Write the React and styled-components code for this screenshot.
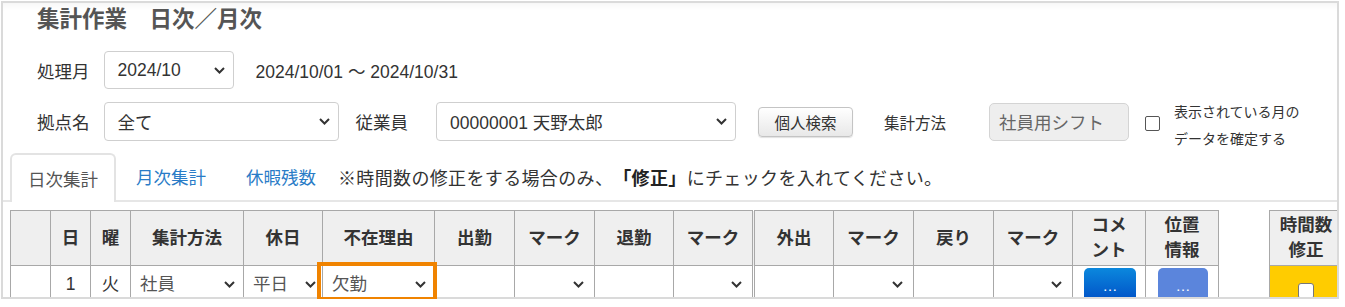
import styled, { createGlobalStyle } from "styled-components";

const GlobalStyle = createGlobalStyle`
  body {
    margin: 0;
    background: #fff;
    font-family: "Liberation Sans", "Noto Sans CJK JP", sans-serif;
    color: #333;
  }
`;

function Chevron() {
  return (
    <svg width="11" height="7" viewBox="0 0 11 7">
      <polyline
        points="1,1 5.5,5.5 10,1"
        fill="none"
        stroke="#333"
        strokeWidth="2"
      />
    </svg>
  );
}

const main = [
  { w: 40, label: "" },
  { w: 40, label: "日" },
  { w: 40, label: "曜" },
  { w: 113, label: "集計方法" },
  { w: 79, label: "休日" },
  { w: 112, label: "不在理由" },
  { w: 80, label: "出勤" },
  { w: 80, label: "マーク" },
  { w: 79, label: "退勤" },
  { w: 80, label: "マーク" },
  { w: 80, label: "外出", split: true },
  { w: 80, label: "マーク" },
  { w: 80, label: "戻り" },
  { w: 79, label: "マーク" },
  { w: 73, label: ["コメ", "ント"] },
  { w: 73, label: ["位置", "情報"] },
];

export default function App() {
  return (
    <>
      <GlobalStyle />
      <Frame>
        <Clip>
          <Title>集計作業　日次／月次</Title>

          <FormRow $top={14} $height={38}>
            <Label>処理月</Label>
            <SelectBox $width={130} $gap={14}>
              <span>2024/10</span>
              <Chevron />
            </SelectBox>
            <Plain $gap={22}>2024/10/01 ～ 2024/10/31</Plain>
          </FormRow>

          <FormRow $top={13} $height={39}>
            <Label>拠点名</Label>
            <SelectBox $width={235} $gap={14}>
              <span>全て</span>
              <Chevron />
            </SelectBox>
            <Label $gap={17}>従業員</Label>
            <SelectBox $width={300} $gap={28}>
              <span>00000001 天野太郎</span>
              <Chevron />
            </SelectBox>
            <SearchButton>個人検索</SearchButton>
            <Label $gap={31} $size={15.5}>
              集計方法
            </Label>
            <ReadOnlyBox>社員用シフト</ReadOnlyBox>
            <CheckBox $gap={16} />
            <ConfirmText>
              表示されている月の
              <br />
              データを確定する
            </ConfirmText>
          </FormRow>

          <TabBar>
            <Tab $active>日次集計</Tab>
            <Tab>月次集計</Tab>
            <Tab>休暇残数</Tab>
            <Note>
              ※時間数の修正をする場合のみ、<b>「修正」</b>にチェックを入れてください。
            </Note>
          </TabBar>

          <TableArea>
            <Grid style={{ width: 1208 }}>
              <colgroup>
                {main.map((c, i) => (
                  <col key={i} style={{ width: c.w }} />
                ))}
              </colgroup>
              <thead>
                <tr>
                  {main.map((c, i) => (
                    <Th key={i} $split={c.split}>
                      {Array.isArray(c.label) ? (
                        <>
                          {c.label[0]}
                          <br />
                          {c.label[1]}
                        </>
                      ) : (
                        c.label
                      )}
                    </Th>
                  ))}
                </tr>
              </thead>
              <tbody>
                <tr>
                  <Td />
                  <Td $center>1</Td>
                  <Td $center>火</Td>
                  <Td>
                    <CellSelect>
                      <span>社員</span>
                      <Chevron />
                    </CellSelect>
                  </Td>
                  <Td>
                    <CellSelect $right={6}>
                      <span>平日</span>
                      <Chevron />
                    </CellSelect>
                  </Td>
                  <Td>
                    <CellSelect>
                      <span>欠勤</span>
                      <Chevron />
                    </CellSelect>
                  </Td>
                  <Td />
                  <Td>
                    <CellSelect $right={10}>
                      <span />
                      <Chevron />
                    </CellSelect>
                  </Td>
                  <Td />
                  <Td>
                    <CellSelect $right={10}>
                      <span />
                      <Chevron />
                    </CellSelect>
                  </Td>
                  <Td $split />
                  <Td>
                    <CellSelect $right={10}>
                      <span />
                      <Chevron />
                    </CellSelect>
                  </Td>
                  <Td />
                  <Td>
                    <CellSelect $right={10}>
                      <span />
                      <Chevron />
                    </CellSelect>
                  </Td>
                  <Td>
                    <DotButton $left={11} $width={52}>
                      …
                    </DotButton>
                  </Td>
                  <Td>
                    <DotButton $left={12} $width={50} $pale>
                      …
                    </DotButton>
                  </Td>
                </tr>
              </tbody>
            </Grid>

            <Grid style={{ width: 74 }}>
              <thead>
                <tr>
                  <Th>
                    時間数
                    <br />
                    修正
                  </Th>
                </tr>
              </thead>
              <tbody>
                <tr>
                  <FixCell>
                    <SmallCheck />
                  </FixCell>
                </tr>
              </tbody>
            </Grid>
          </TableArea>
        </Clip>
        <Highlight />
      </Frame>
    </>
  );
}

const Frame = styled.div`
  position: relative;
  box-sizing: border-box;
  width: 1338px;
  height: 298px;
  margin: 1px 0 0 1px;
  border: 2px solid #dadada;
  box-shadow: inset 0 9px 8px -8px rgba(0, 0, 0, 0.06);
`;

const Clip = styled.div`
  height: 100%;
  overflow: hidden;
  display: flex;
  flex-direction: column;
`;

const Title = styled.h1`
  margin: 0;
  padding-left: 34px;
  height: 34px;
  line-height: 34px;
  font-size: 22.5px;
  font-weight: bold;
  color: #555;
  white-space: nowrap;
`;

const FormRow = styled.div`
  display: flex;
  align-items: center;
  flex-shrink: 0;
  margin-top: ${(p) => p.$top}px;
  height: ${(p) => p.$height}px;
  padding-left: 34px;
  white-space: nowrap;
`;

const Label = styled.span`
  margin-left: ${(p) => p.$gap || 0}px;
  font-size: ${(p) => p.$size || 17.5}px;
  color: #333;
`;

const Plain = styled.span`
  margin-left: ${(p) => p.$gap}px;
  font-size: 17.5px;
  color: #333;
`;

const SelectBox = styled.div`
  box-sizing: border-box;
  display: flex;
  align-items: center;
  justify-content: space-between;
  width: ${(p) => p.$width}px;
  height: 100%;
  margin-left: ${(p) => p.$gap}px;
  padding: 0 8px 0 13px;
  border: 1px solid #cfcfcf;
  border-radius: 4px;
  background: #fff;
  font-size: 17.5px;
  color: #333;
`;

const SearchButton = styled.button`
  box-sizing: border-box;
  width: 95px;
  height: 30px;
  margin-left: 22px;
  padding: 0;
  border: 1px solid #c4c4c4;
  border-radius: 4px;
  background: linear-gradient(#ffffff, #e8e8e8);
  box-shadow: 0 1px 1px rgba(0, 0, 0, 0.12);
  font-family: inherit;
  font-size: 15.5px;
  color: #333;
`;

const ReadOnlyBox = styled.div`
  box-sizing: border-box;
  display: flex;
  align-items: center;
  width: 140px;
  height: 38px;
  margin-left: 43px;
  padding-left: 9px;
  border: 1px solid #d4d4d4;
  border-radius: 5px;
  background: #eeeeee;
  font-size: 17.5px;
  color: #666;
`;

const CheckBox = styled.span`
  box-sizing: border-box;
  width: 15px;
  height: 15px;
  margin-left: ${(p) => p.$gap}px;
  margin-top: 4px;
  border: 1.5px solid #555;
  border-radius: 2px;
  background: #fff;
`;

const ConfirmText = styled.div`
  margin-left: 14px;
  margin-top: 9px;
  font-size: 14px;
  line-height: 27px;
  color: #333;
`;

const TabBar = styled.div`
  display: flex;
  align-items: stretch;
  flex-shrink: 0;
  height: 47px;
  margin-top: 12px;
  padding-left: 7px;
  border-bottom: 2px solid #e6e6e6;
  white-space: nowrap;
`;

const Tab = styled.div`
  box-sizing: border-box;
  display: flex;
  align-items: center;
  padding: 0 ${(p) => (p.$active ? 16 : 20)}px;
  margin-bottom: ${(p) => (p.$active ? -2 : 0)}px;
  border: ${(p) => (p.$active ? "2px solid #e3e3e3" : "none")};
  border-bottom: none;
  border-radius: 6px 6px 0 0;
  background: #fff;
  font-size: 17.5px;
  color: ${(p) => (p.$active ? "#555" : "#2a7cc7")};
`;

const Note = styled.div`
  display: flex;
  align-items: center;
  margin-left: 2px;
  font-size: 18px;
  letter-spacing: 0.35px;
  color: #333;

  b {
    color: #222;
  }
`;

const TableArea = styled.div`
  display: flex;
  align-items: flex-start;
  gap: 50px;
  flex-shrink: 0;
  margin-top: 8px;
  padding-left: 7px;
`;

const Grid = styled.table`
  border-collapse: collapse;
  table-layout: fixed;
  flex-shrink: 0;
`;

const Th = styled.th`
  box-sizing: border-box;
  height: 55px;
  padding: 0;
  border: 1px solid #a8a8a8;
  border-left: ${(p) => (p.$split ? "3px double #a8a8a8" : "1px solid #a8a8a8")};
  background: #efefef;
  font-size: 17.5px;
  font-weight: bold;
  line-height: 25px;
  color: #333;
  text-align: center;
`;

const Td = styled.td`
  box-sizing: border-box;
  height: 40px;
  padding: 0;
  border: 1px solid #a8a8a8;
  border-left: ${(p) => (p.$split ? "3px double #a8a8a8" : "1px solid #a8a8a8")};
  font-size: 17.5px;
  color: #333;
  text-align: ${(p) => (p.$center ? "center" : "left")};
  vertical-align: top;
  line-height: 36px;
`;

const CellSelect = styled.div`
  display: flex;
  align-items: center;
  justify-content: space-between;
  height: 36px;
  padding: 0 ${(p) => p.$right || 8}px 0 9px;
  font-size: 17.5px;
  color: #555;
`;

const DotButton = styled.div`
  box-sizing: border-box;
  display: flex;
  align-items: center;
  justify-content: center;
  width: ${(p) => p.$width}px;
  height: 34px;
  margin: 2px 0 0 ${(p) => p.$left}px;
  border-radius: 5px;
  background: ${(p) =>
    p.$pale ? "#5b85dc" : "linear-gradient(#0b88dd, #004fc6)"};
  font-size: 15px;
  line-height: 1;
  color: #fff;
`;

const FixCell = styled.td`
  box-sizing: border-box;
  height: 40px;
  padding: 17px 0 0;
  border: 1px solid #a8a8a8;
  background: #ffcc00;
  text-align: center;
  vertical-align: top;
`;

const SmallCheck = styled.span`
  display: inline-block;
  box-sizing: border-box;
  width: 16px;
  height: 16px;
  border: 1.5px solid #777;
  border-radius: 3px;
  background: #fff;
`;

const Highlight = styled.div`
  position: absolute;
  left: 314px;
  top: 259px;
  box-sizing: border-box;
  width: 120px;
  height: 39px;
  border: 4px solid #f08300;
  pointer-events: none;
`;
